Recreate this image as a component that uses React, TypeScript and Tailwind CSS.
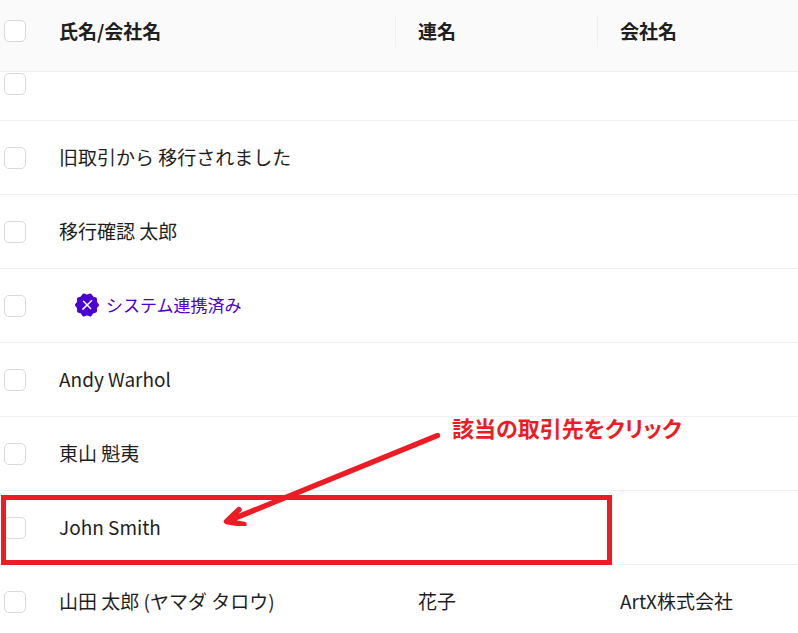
import { useMemo } from "react";

type Client = {
  id: number;
  name: string;
  joint?: string;
  company?: string;
  linked?: boolean;
};

const clients: Client[] = [
  { id: 1, name: "" },
  { id: 2, name: "旧取引から 移行されました" },
  { id: 3, name: "移行確認 太郎" },
  { id: 4, name: "", linked: true },
  { id: 5, name: "Andy Warhol" },
  { id: 6, name: "東山 魁夷" },
  { id: 7, name: "John Smith" },
  { id: 8, name: "山田 太郎 (ヤマダ タロウ)", joint: "花子", company: "ArtX株式会社" },
];

const Checkbox = ({ label }: { label: string }) => (
  <input
    type="checkbox"
    aria-label={label}
    className="ml-1 block size-[22px] appearance-none rounded-[5px] border border-[#d9d9d9] bg-white checked:bg-[#4b00d1]"
  />
);

const LinkedBadge = () => {
  // ten-pointed seal around the cross
  const points = useMemo(
    () =>
      Array.from({ length: 20 }, (_, i) => {
        const angle = (Math.PI / 10) * i;
        const r = i % 2 === 0 ? 10.8 : 9.2;
        return `${12 + r * Math.cos(angle)},${12 + r * Math.sin(angle)}`;
      }).join(" "),
    []
  );

  return (
    <span className="flex items-center gap-[7px] pl-4 text-[17px] text-[#4b00d1]">
      <svg viewBox="0 0 24 24" className="size-6 shrink-0" aria-hidden="true">
        <polygon points={points} fill="#4b00d1" stroke="#4b00d1" strokeWidth="2.4" strokeLinejoin="round" />
        <path d="M17 7.2 7.4 16.6M8.2 8l7.8 8" fill="none" stroke="#fff" strokeWidth="1.5" />
      </svg>
      システム連携済み
    </span>
  );
};

const Annotations = () => (
  <div className="pointer-events-none absolute inset-0 text-[#ed1c24]">
    <div className="absolute top-[495px] left-px h-[70px] w-[611px] border-5 border-[#ed1c24]" />
    <svg viewBox="0 0 220 96" className="absolute top-[430px] left-[222px] h-24 w-[220px]" aria-hidden="true">
      <path
        d="M215.5 5.5 4.5 91.5M17 79.5 4.5 91.5l17.5 3"
        fill="none"
        stroke="currentColor"
        strokeWidth="5.4"
        strokeLinecap="round"
        strokeLinejoin="round"
      />
      <path d="M5 91.5 15 82v9z" fill="currentColor" />
    </svg>
    <p className="absolute top-[411px] left-[452px] text-[22px] leading-8 font-bold whitespace-nowrap [font-feature-settings:'palt']">
      該当の取引先をクリック
    </p>
  </div>
);

const App = () => {
  return (
    <main className="relative h-screen overflow-hidden bg-white font-['Noto_Sans_CJK_JP',sans-serif] text-[19px] leading-7 text-[#1f1f1f]">
      <table className="w-full table-fixed border-separate border-spacing-0 text-left">
        <colgroup>
          <col className="w-[37px]" />
          <col className="w-[359px]" />
          <col className="w-[202px]" />
          <col />
        </colgroup>
        <thead className="bg-[#fafafa]">
          <tr className="h-[72px]">
            <th className="border-b border-[#f0f0f0] p-0 pb-2.5">
              <Checkbox label="すべて選択" />
            </th>
            <th className="border-b border-[#f0f0f0] p-0 pb-2.5">
              <div className="flex h-8 items-center border-r border-[#f0f0f0] pl-[22px] font-bold">氏名/会社名</div>
            </th>
            <th className="border-b border-[#f0f0f0] p-0 pb-2.5">
              <div className="flex h-8 items-center border-r border-[#f0f0f0] pl-[22px] font-bold">連名</div>
            </th>
            <th className="border-b border-[#f0f0f0] p-0 pb-2.5">
              <div className="flex h-8 items-center pl-[22px] font-bold">会社名</div>
            </th>
          </tr>
        </thead>
        <tbody>
          {clients.map((c) => (
            <tr key={c.id} className="h-[74px] first:h-[49px] first:align-top">
              <td className="border-b border-[#f0f0f0] p-0 pt-px">
                <Checkbox label={c.name || `取引先 ${c.id}`} />
              </td>
              <td className="border-b border-[#f0f0f0] p-0 pb-0.5 pl-[22px]">{c.linked ? <LinkedBadge /> : c.name}</td>
              <td className="border-b border-[#f0f0f0] p-0 pb-0.5 pl-[22px]">{c.joint}</td>
              <td className="border-b border-[#f0f0f0] p-0 pb-0.5 pl-[22px]">{c.company}</td>
            </tr>
          ))}
        </tbody>
      </table>
      <Annotations />
    </main>
  );
};

export default App;
